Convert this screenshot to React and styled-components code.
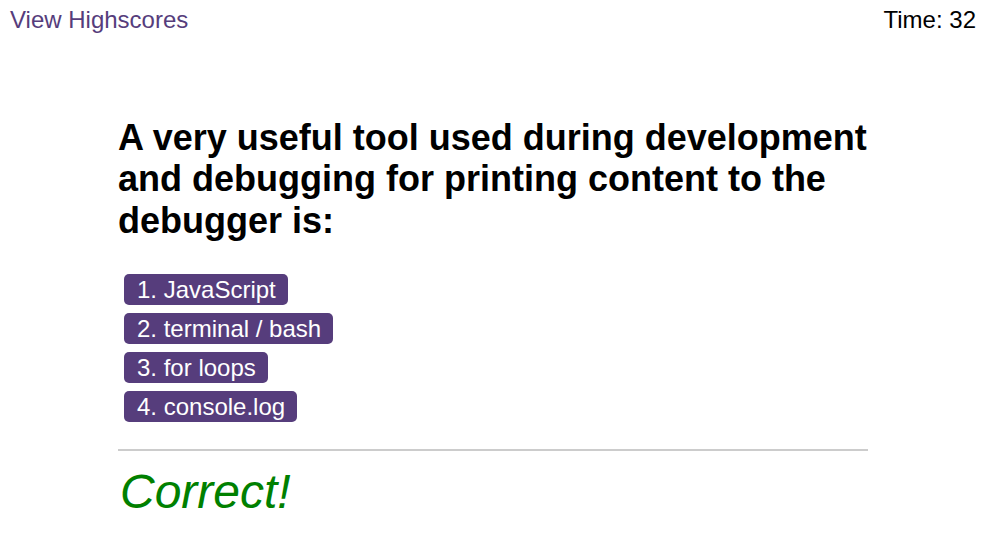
import React from 'react';
import styled, { createGlobalStyle } from 'styled-components';

const GlobalStyle = createGlobalStyle`
    body {
        margin: 0;
        font-family: "Liberation Sans", Arial, sans-serif;
        background: #ffffff;
        color: #000000;
    }
`

const TopBar = styled.header`
    display: flex;
    justify-content: space-between;
    align-items: flex-start;
    padding: 6px 8px 0 10px;
    font-size: 24px;
`

const HighscoreLink = styled.a`
    color: #563d7c;
    text-decoration: none;
    cursor: pointer;
`

const Timer = styled.div`
    color: #000000;
`

const Quiz = styled.main`
    width: 750px;
    margin: 83px 0 0 118px;
`

const Question = styled.h1`
    margin: 0;
    font-size: 36px;
    font-weight: bold;
    line-height: 1.15;
`

const Choices = styled.ol`
    list-style: none;
    margin: 33px 0 0 6px;
    padding: 0;
    display: flex;
    flex-direction: column;
    align-items: flex-start;
    gap: 8px;
`

const Choice = styled.button`
    font-family: "Liberation Sans", Arial, sans-serif;
    font-size: 24px;
    line-height: 25px;
    color: #ffffff;
    background-color: #563d7c;
    border: none;
    border-radius: 5px;
    padding: 3px 12px 3px 13px;
    cursor: pointer;
`

const Divider = styled.hr`
    margin: 27px 0 0;
    border: none;
    height: 2px;
    background-color: #cccccc;
`

const Feedback = styled.p`
    margin: 13px 0 0 2px;
    font-size: 48px;
    font-style: italic;
    line-height: 1.15;
    color: #008000;
`

const choices = ['JavaScript', 'terminal / bash', 'for loops', 'console.log']

export default function App() {
    return (
        <>
            <GlobalStyle />
            <TopBar>
                <HighscoreLink>View Highscores</HighscoreLink>
                <Timer>Time: 32</Timer>
            </TopBar>
            <Quiz>
                <Question>
                    A very useful tool used during development and debugging for printing content to the debugger is:
                </Question>
                <Choices>
                    {choices.map((c, i) => (
                        <li key={c}>
                            <Choice>{i + 1}. {c}</Choice>
                        </li>
                    ))}
                </Choices>
                <Divider />
                <Feedback>Correct!</Feedback>
            </Quiz>
        </>
    )
}
